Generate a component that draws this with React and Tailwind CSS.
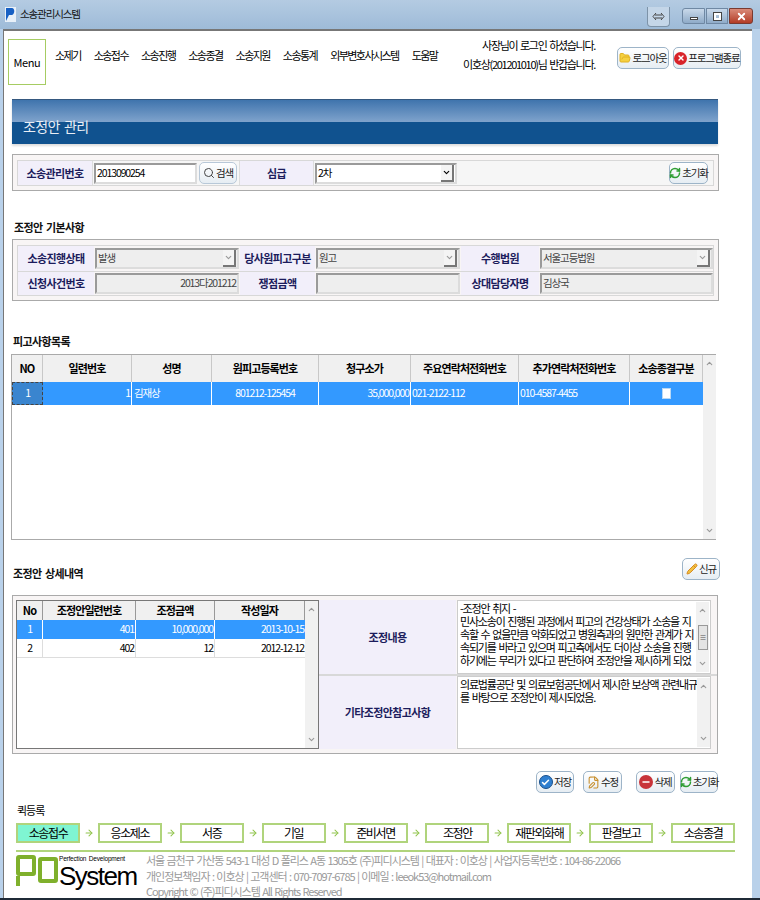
import React from "react";
import { Search, RefreshCw, Check, Minus, Pencil, FileEdit, X, ArrowRight, ChevronDown, ChevronUp, FolderOpen } from "lucide-react";

const menus = ["소제기", "소송접수", "소송진행", "소송종결", "소송지원", "소송통계", "외부변호사시스템", "도움말"];
const steps = ["소송접수", "응소제소", "서증", "기일", "준비서면", "조정안", "재판외화해", "판결보고", "소송종결"];
const gridCols = "grid grid-cols-[31px_89px_80px_107px_92px_108px_111px_73px]";
const detailCols = "grid grid-cols-[26px_93px_79px_90px]";

const Btn = ({ icon, children, className = "" }) => (
  <button className={`flex items-center justify-center gap-px h-[22px] rounded-[5px] border border-[#9db4c8] bg-gradient-to-b from-white to-[#e6edf3] text-[#222] whitespace-nowrap shrink-0 ${className}`}>
    {icon}
    <span>{children}</span>
  </button>
);

const Label = ({ className = "", children }) => (
  <div className={`flex items-center justify-center bg-[#f2effa] text-[#1c1c5c] font-bold text-[11px] tracking-[-0.6px] shrink-0 ${className}`}>
    {children}
  </div>
);

const Field = ({ className = "", arrow, right, children, gray = true }) => (
  <div className={`flex items-center h-[21px] border-2 border-t-[#9a9a9a] border-l-[#9a9a9a] border-r-[#dcdcdc] border-b-[#dcdcdc] px-px text-[#444] ${gray ? "bg-[#eeeeee]" : "bg-white text-black"} ${className}`}>
    <span className={`flex-1 whitespace-nowrap ${right ? "text-right" : ""}`}>{children}</span>
    {arrow && (
      <span className="flex items-center justify-center w-[13px] h-[17px] bg-[#f4f4f4] border-r-2 border-b-2 border-[#777]">
        <ChevronDown size={9} strokeWidth={3} className={gray ? "text-[#999]" : "text-black"} />
      </span>
    )}
  </div>
);

const Title = ({ className = "", children }) => (
  <div className={`font-bold text-[11px] tracking-[-0.6px] text-[#111] h-[14px] leading-[14px] ${className}`}>{children}</div>
);

const ScrollCol = ({ className = "", thumb }) => (
  <div className={`flex flex-col justify-between items-center bg-[#f1f1f1] w-[13px] shrink-0 py-1 ${className}`}>
    <ChevronUp size={9} strokeWidth={3} className="text-[#999]" />
    {thumb && (
      <div className="w-[10px] h-[25px] border border-[#999] bg-[#e4e4e4] flex items-center justify-center text-[7px] text-[#555]">≡</div>
    )}
    <ChevronDown size={9} strokeWidth={3} className="text-[#999]" />
  </div>
);

const GreenRefresh = () => <RefreshCw size={12} strokeWidth={3} className="text-[#2f9e34] shrink-0" />;

export default function App() {
  return (
    <div className="w-[760px] h-[900px] overflow-hidden flex flex-col bg-[#b9d1ea] border-b-2 border-[#1f2a36] font-['Noto_Sans_CJK_KR',sans-serif] text-[10.5px] leading-none tracking-[-1.1px] [word-spacing:1.5px] text-black">
      {/* TITLE BAR */}
      <div className="h-[29px] shrink-0 flex items-center pl-[5px] pr-[7px] bg-gradient-to-b from-[#b4cbe2] to-[#9ebbd8]">
        <svg width="11" height="15" viewBox="0 0 11 15" className="mr-[4px]">
          <rect width="11" height="15" fill="#e8f0f8" />
          <path d="M1 1h6c3 0 3 6 0 7H4l-3 6z" fill="#1760c4" />
        </svg>
        <span className="text-[10.5px] text-[#111]">소송관리시스템</span>
        <div className="ml-auto flex items-start h-full">
          <div className="mt-[7px] mr-[12px] w-[23px] h-[20px] rounded-b-[4px] border border-t-0 border-[#7d93a8] bg-[#c4d6e8] flex items-center justify-center">
            <svg width="13" height="9" viewBox="0 0 13 9" fill="none" stroke="#444" strokeWidth="1">
              <path d="M4 1 1 4.5 4 8M9 1l3 3.5L9 8M3 3h7M3 6h7" />
            </svg>
          </div>
          <div className="mt-[8px] flex gap-px">
            <div className="w-[23px] h-[16px] rounded-l-[3px] border border-[#6f88a3] bg-gradient-to-b from-[#c9d9ea] to-[#8fabc8] flex items-end justify-center pb-[3px]">
              <div className="w-[8px] h-[3px] bg-white border border-[#444]" />
            </div>
            <div className="w-[22px] h-[16px] border border-[#6f88a3] bg-gradient-to-b from-[#c9d9ea] to-[#8fabc8] flex items-center justify-center">
              <div className="w-[7px] h-[7px] bg-transparent border-2 border-white outline outline-1 outline-[#444]" />
            </div>
            <div className="w-[24px] h-[16px] rounded-r-[3px] border border-[#7a3a30] bg-gradient-to-b from-[#d98a78] to-[#b23a24] flex items-center justify-center">
              <X size={11} strokeWidth={4} className="text-white" />
            </div>
          </div>
        </div>
      </div>

      {/* WINDOW BODY */}
      <div className="ml-[3px] w-[749px] flex-1 min-h-0 bg-white border-l border-t-2 border-[#777] flex flex-col overflow-hidden">
        {/* TOP MENU */}
        <div className="flex items-start mt-[8px] ml-[4px] h-[46px] shrink-0">
          <div className="w-[38px] h-[46px] border border-[#a6cc62] flex items-center justify-center text-[11px] tracking-[-0.4px] shrink-0">Menu</div>
          <div className="flex gap-[13px] ml-[9px] mt-[11px] text-[11px] tracking-[-1.55px] whitespace-nowrap">
            {menus.map((m) => (
              <span key={m}>{m}</span>
            ))}
          </div>
          <div className="ml-auto mr-[11px] flex items-start">
            <div className="text-right text-[11px] tracking-[-1.3px] leading-[19px] mr-[22px] mt-[-3px] whitespace-nowrap">
              <div>사장님이 로그인 하셨습니다.</div>
              <div>이호상(201201010)님 반갑습니다.</div>
            </div>
            <Btn icon={<FolderOpen size={12} className="text-[#e0b020] fill-[#f5d040]" />} className="w-[52px] mt-[8px]">로그아웃</Btn>
            <Btn
              icon={
                <span className="w-[13px] h-[13px] rounded-full bg-[#d8232a] flex items-center justify-center">
                  <X size={8} strokeWidth={4} className="text-white" />
                </span>
              }
              className="w-[68px] ml-[4px] mt-[8px] border-[#5d8f98]"
            >
              프로그램종료
            </Btn>
          </div>
        </div>

        <div className="flex flex-col pl-[8px] w-[715px] shrink-0">
          {/* PAGE TITLE */}
          <div className="mt-[14px] h-[45px] flex flex-col border-t border-[#35587f] shadow-[0_2px_2px_#ddd] w-[706px]">
            <div className="h-[22px] bg-gradient-to-b from-[#3f74ad] to-[#7fa3cc]" />
            <div className="flex-1 bg-[#10528f] pl-[11px] text-[#e9eef5] text-[14px] tracking-[-0.6px]">
              <div className="-mt-[4px] leading-[16px]">조정안 관리</div>
            </div>
          </div>

          {/* SEARCH */}
          <div className="mt-[10px] h-[37px] w-[707px] border border-[#aaa] bg-[#f8f5f5] px-[4px] pt-[5px]">
            <div className="flex items-center h-[26px] border border-[#d8d8d8] bg-[#f6f6f6]">
              <Label className="w-[75px] h-full border-r border-[#ddd]">소송관리번호</Label>
              <Field gray={false} className="w-[103px] ml-[1px]">2013090254</Field>
              <Btn icon={<Search size={12} className="text-[#444]" />} className="w-[38px] ml-[2px] border-[#b8c8d8]">검색</Btn>
              <Label className="w-[75px] h-full ml-[2px] border-x border-[#ddd]">심급</Label>
              <Field gray={false} arrow className="w-[142px] ml-[1px]">2차</Field>
              <Btn icon={<GreenRefresh />} className="w-[39px] ml-auto mr-[5px]">초기화</Btn>
            </div>
          </div>

          {/* BASIC INFO */}
          <Title className="mt-[29px] ml-[2px]">조정안 기본사항</Title>
          <div className="mt-[5px] h-[62px] w-[707px] border border-[#aaa] bg-[#f8f5f5] px-[4px] pt-[5px]">
            <div className="flex h-[26px] border border-[#d8d8d8] border-b-0 gap-x-px">
              <Label className="w-[76px]">소송진행상태</Label>
              <div className="w-[144px] flex items-center"><Field arrow className="w-full">발생</Field></div>
              <Label className="w-[75px]">당사원피고구분</Label>
              <div className="w-[144px] flex items-center"><Field arrow className="w-full">원고</Field></div>
              <Label className="w-[78px]">수행법원</Label>
              <div className="flex-1 flex items-center"><Field arrow className="w-full">서울고등법원</Field></div>
            </div>
            <div className="flex h-[25px] border border-[#d8d8d8] gap-x-px">
              <Label className="w-[76px]">신청사건번호</Label>
              <div className="w-[144px] flex items-center"><Field right className="w-full">2013다201212</Field></div>
              <Label className="w-[75px]">쟁점금액</Label>
              <div className="w-[144px] flex items-center"><Field className="w-full" /></div>
              <Label className="w-[78px]">상대담당자명</Label>
              <div className="flex-1 flex items-center"><Field className="w-full">김상국</Field></div>
            </div>
          </div>

          {/* DEFENDANT LIST */}
          <Title className="mt-[33px] ml-px">피고사항목록</Title>
          <div className="mt-[6px] -ml-px h-[186px] w-[705px] border border-[#aaa] flex">
            <div className="w-[691px] shrink-0 flex flex-col">
              <div className={`${gridCols} h-[27px] bg-[#f0f0f0]`}>
                {["NO", "일련번호", "성명", "원피고등록번호", "청구소가", "주요연락처전화번호", "추가연락처전화번호", "소송종결구분"].map((h) => (
                  <div key={h} className="flex items-center justify-center font-bold text-[11px] tracking-[-0.9px] border-r border-[#c8c8c8] whitespace-nowrap">{h}</div>
                ))}
              </div>
              <div className={`${gridCols} h-[23px] bg-[#3399ff] text-white items-center`}>
                <div className="h-full flex items-center justify-center border border-dashed border-[#444] bg-[#3a85cf]">1</div>
                <div className="h-full flex items-center justify-end pr-px border-r border-white">1</div>
                <div className="h-full flex items-center pl-[2px] border-r border-white">김재상</div>
                <div className="h-full flex items-center justify-center border-r border-white">801212-125454</div>
                <div className="h-full flex items-center justify-end pr-px border-r border-white">35,000,000</div>
                <div className="h-full flex items-center pl-px border-r border-white">021-2122-112</div>
                <div className="h-full flex items-center pl-px border-r border-white">010-4587-4455</div>
                <div className="h-full flex items-center justify-center">
                  <span className="w-[9px] h-[11px] bg-white border border-[#b8d8f5]" />
                </div>
              </div>
            </div>
            <ScrollCol className="h-full" />
          </div>

          {/* DETAIL */}
          <div className="mt-[18px] h-[22px] flex items-end justify-between">
            <Title className="ml-px">조정안 상세내역</Title>
            <Btn icon={<Pencil size={12} className="text-[#d88a20] fill-[#f0c040]" />} className="w-[38px] mr-[-1px]">신규</Btn>
          </div>
          <div className="mt-[15px] h-[159px] w-[706px] border border-[#aaa] bg-[#f8f5f5] flex pl-[3px] py-[4px]">
            <div className="w-[303px] h-[149px] border border-[#777] bg-white flex shrink-0">
              <div className="w-[288px] flex flex-col shrink-0">
                <div className={`${detailCols} h-[19px] bg-[#f0f0f0]`}>
                  {["No", "조정안일련번호", "조정금액", "작성일자"].map((h) => (
                    <div key={h} className="flex items-center justify-center font-bold text-[11px] tracking-[-0.9px] border-r border-[#999]">{h}</div>
                  ))}
                </div>
                <div className={`${detailCols} h-[19px] bg-[#3399ff] text-white`}>
                  <div className="flex items-center justify-center border-r border-white">1</div>
                  <div className="flex items-center justify-end pr-px border-r border-white">401</div>
                  <div className="flex items-center justify-end pr-px border-r border-white">10,000,000</div>
                  <div className="flex items-center justify-end pr-px">2013-10-15</div>
                </div>
                <div className={`${detailCols} h-[19px] border-b border-[#ddd]`}>
                  <div className="flex items-center justify-center border-r border-[#ddd]">2</div>
                  <div className="flex items-center justify-end pr-px border-r border-[#ddd]">402</div>
                  <div className="flex items-center justify-end pr-px border-r border-[#ddd]">12</div>
                  <div className="flex items-center justify-end pr-px">2012-12-12</div>
                </div>
              </div>
              <ScrollCol className="h-full ml-auto" />
            </div>
            <div className="flex-1 flex flex-col">
              <div className="h-[76px] flex border-b-2 border-[#d8d8d8]">
                <Label className="w-[137px]">조정내용</Label>
                <div className="w-[254px] h-full border border-[#ccc] ml-px bg-white flex p-px">
                  <div className="flex-1 text-[11px] tracking-[-1.2px] leading-[13px] pl-px whitespace-nowrap">
                    -조정안 취지 -<br />
                    민사소송이 진행된 과정에서 피고의 건강상태가 소송을 지<br />
                    속할 수 없을만큼 악화되었고 병원측과의 원만한 관계가 지<br />
                    속되기를 바라고 있으며 피고측에서도 더이상 소송을 진행<br />
                    하기에는 무리가 있다고 판단하여 조정안을 제시하게 되었
                  </div>
                  <ScrollCol thumb />
                </div>
              </div>
              <div className="flex-1 flex">
                <Label className="w-[137px]">기타조정안참고사항</Label>
                <div className="w-[254px] h-full border border-[#ccc] ml-px bg-white flex p-px">
                  <div className="flex-1 text-[11px] tracking-[-1.2px] leading-[13px] pl-px whitespace-nowrap">
                    의료법률공단 및 의료보험공단에서 제시한 보상액 관련내규<br />
                    를 바탕으로 조정안이 제시되었음.
                  </div>
                  <ScrollCol />
                </div>
              </div>
            </div>
          </div>

          {/* ACTIONS */}
          <div className="mt-[17px] flex justify-end w-[706px]">
            <Btn
              icon={
                <span className="w-[14px] h-[14px] rounded-full bg-[#2f7fd0] border border-[#1a4f8a] flex items-center justify-center">
                  <Check size={9} strokeWidth={4} className="text-white" />
                </span>
              }
              className="w-[38px] border-[#7f9fc0]"
            >
              저장
            </Btn>
            <Btn icon={<FileEdit size={13} className="text-[#c89030]" />} className="w-[39px] ml-[9px]">수정</Btn>
            <Btn
              icon={
                <span className="w-[14px] h-[14px] rounded-full bg-[#c8343a] flex items-center justify-center">
                  <Minus size={10} strokeWidth={4} className="text-white" />
                </span>
              }
              className="w-[39px] ml-[14px]"
            >
              삭제
            </Btn>
            <Btn icon={<GreenRefresh />} className="w-[38px] ml-[5px]">초기화</Btn>
          </div>
        </div>

        {/* QUICK REGISTER */}
        <div className="mt-[11px] ml-[13px] text-[11px] tracking-[-1px] h-[12px] leading-[12px]">퀵등록</div>
        <div className="mt-[7px] ml-[12px] w-[719px] flex justify-between shrink-0">
          {steps.map((s, i) => (
            <React.Fragment key={s}>
              {i > 0 && (
                <span className="flex-1 flex items-center justify-center">
                  <ArrowRight size={10} strokeWidth={2.5} className="text-[#8fc34a]" />
                </span>
              )}
              <div className={`w-[64px] h-[20px] flex items-center justify-center border-2 border-[#b0d47c] text-[12px] tracking-[-1.4px] shrink-0 ${i === 0 ? "bg-[#7ff5d2]" : "bg-white"}`}>{s}</div>
            </React.Fragment>
          ))}
        </div>

        {/* FOOTER */}
        <div className="mt-[7px] ml-[12px] w-[719px] border-t-2 border-[#b0d47c] flex pt-[3px] shrink-0">
          <div className="flex w-[120px] shrink-0">
            <div className="flex flex-col w-[20px] h-[31px] shrink-0">
              <div className="h-[21px] border-[4px] border-[#7fb02c] rounded-[3px]" />
              <div className="h-[10px] w-[4px] bg-[#7fb02c]" />
            </div>
            <div className="w-[20px] h-[26px] ml-[2px] mt-[2px] border-[4px] border-[#7fb02c] rounded-[3px] shrink-0" />
            <div className="ml-[1px] flex flex-col">
              <span className="text-[6.5px] leading-[8px] tracking-[-0.2px] [word-spacing:1px] font-['Liberation_Sans',sans-serif] whitespace-nowrap">Perfection Development</span>
              <span className="text-[26px] leading-[26px] tracking-[-1.5px] font-['Liberation_Sans',sans-serif]">System</span>
            </div>
          </div>
          <div className="-mt-[2px] ml-[10px] text-[#9a9a9a] text-[11px] tracking-[-1.05px] [word-spacing:1px] leading-[15.5px] whitespace-nowrap">
            <div>서울 금천구 가산동 543-1 대성 D 폴리스 A동 1305호 (주)피디시스템 | 대표자 : 이호상 | 사업자등록번호 : 104-86-22066</div>
            <div>개인정보책임자 : 이호상 | 고객센터 : 070-7097-6785 | 이메일 : leeok53@hotmail.com</div>
            <div>Copyright © (주)피디시스템 All Rights Reserved</div>
          </div>
        </div>
      </div>
    </div>
  );
}
